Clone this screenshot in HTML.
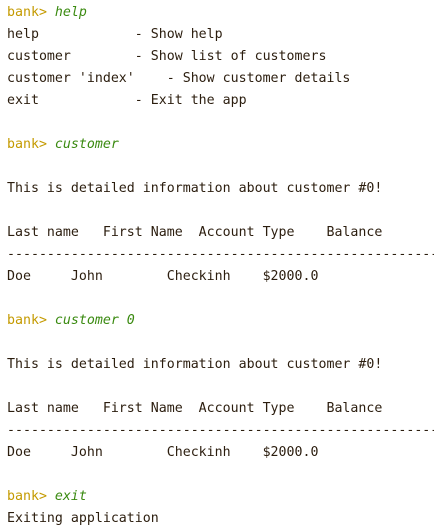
<!DOCTYPE html>
<html><head><meta charset="utf-8"><style>
html,body{margin:0;padding:0;background:#fff;width:434px;height:530px;overflow:hidden}
pre{margin:0;padding:2px 0 0 7px;font-family:"DejaVu Sans Mono","Liberation Mono",monospace;font-size:13.28px;line-height:22px;color:#2b1d0e;white-space:pre;overflow:hidden}
.p{color:#c49a00}.c{color:#3a8a10;font-style:italic}
</style></head><body><pre><span class="p">bank&gt; </span><span class="c">help</span>
help            - Show help
customer        - Show list of customers
customer 'index'    - Show customer details
exit            - Exit the app

<span class="p">bank&gt; </span><span class="c">customer</span>

This is detailed information about customer #0!

Last name   First Name  Account Type    Balance
------------------------------------------------------------
Doe     John        Checkinh    $2000.0

<span class="p">bank&gt; </span><span class="c">customer 0</span>

This is detailed information about customer #0!

Last name   First Name  Account Type    Balance
------------------------------------------------------------
Doe     John        Checkinh    $2000.0

<span class="p">bank&gt; </span><span class="c">exit</span>
Exiting application</pre></body></html>
